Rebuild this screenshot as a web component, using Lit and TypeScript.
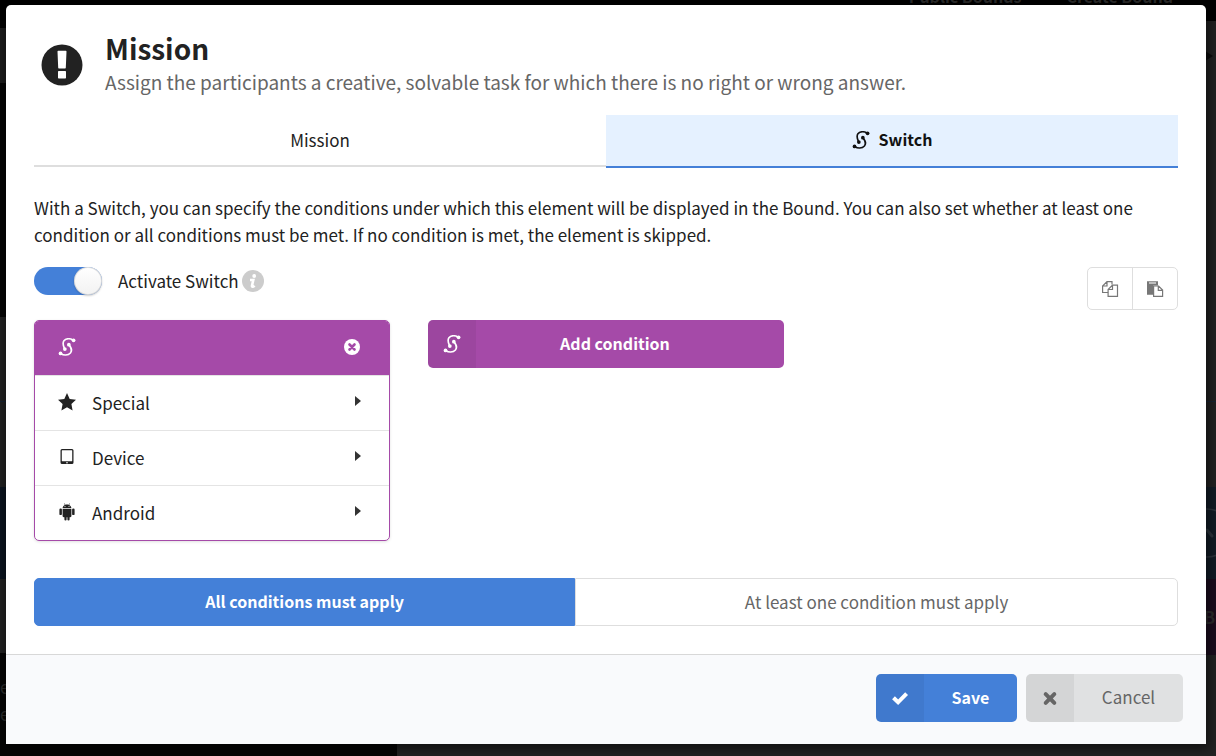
import { LitElement, html, css, svg } from "lit";
import { customElement, state } from "lit/decorators.js";

const icon = (cls: string, box: string, body: unknown) =>
  html`<svg class=${cls} viewBox=${box} aria-hidden="true">${body}</svg>`;

const switchIcon = () =>
  icon(
    "ico",
    "0 1 17 17.5",
    svg`<path d="M14.400 3.200C12 1.200 7.600 1.100 5.500 3.700 3.600 6.400 5 8.600 6.300 11.700M2.800 16.100c2.200 2 6.800 2 9-.6 2.200-2.800.8-5-1.400-7.900" fill="none" stroke="currentColor" stroke-width="1.600"/><g fill="currentColor"><circle cx="14.900" cy="3.300" r="1.800"/><circle cx="2.200" cy="16" r="1.800"/><circle cx="6.400" cy="11.800" r="1.800"/><circle cx="10.300" cy="7.500" r="1.800"/></g>`
  );

const starIcon = () =>
  icon("ico", "0 0 18 18", svg`<path fill="currentColor" d="M9 0l2.700 5.900 6.300.8-4.600 4.400 1.200 6.300L9 14.300l-5.600 3.100 1.200-6.300L0 6.700l6.300-.8z"/>`);

const tabletIcon = () =>
  icon(
    "ico",
    "0 0 18 18",
    svg`<path fill="currentColor" fill-rule="evenodd" d="M4 1h10a1.500 1.500 0 0 1 1.500 1.500v12A1.500 1.500 0 0 1 14 16H4a1.500 1.500 0 0 1-1.500-1.500v-12A1.500 1.500 0 0 1 4 1zm.2 1.200a.4.400 0 0 0-.4.400v10.200c0 .2.200.4.400.4h9.600a.4.4 0 0 0 .400-.400V2.600a.4.400 0 0 0-.400-.400zM9 13.900a.8.800 0 1 0 0 1.600.8.800 0 0 0 0-1.600z"/>`
  );

const androidIcon = () =>
  icon(
    "ico",
    "0 0 18 18",
    svg`<g fill="currentColor"><path fill-rule="evenodd" d="M4.600 5.100c.1-1.500 1-2.600 2.300-3.200L6.100.4l.4-.2.800 1.500c1.100-.4 2.300-.4 3.400 0l.8-1.500.4.200-.8 1.500c1.300.6 2.200 1.700 2.300 3.200zM7 3a.5.500 0 1 0 0 1 .5.500 0 0 0 0-1zm4 0a.5.500 0 1 0 0 1 .5.500 0 0 0 0-1z"/><path d="M4.600 5.700h8.800v7.300c0 .7-.5 1.200-1.200 1.200h-.6v2.300a1.100 1.100 0 0 1-2.200 0v-2.300h-.8v2.300a1.100 1.100 0 0 1-2.200 0v-2.300h-.6c-.7 0-1.200-.5-1.200-1.200z"/><rect x="1.400" y="5.600" width="2.500" height="6.500" rx="1.200"/><rect x="14.100" y="5.600" width="2.500" height="6.500" rx="1.200"/></g>`
  );

const caretIcon = () => icon("caret", "0 0 6 10", svg`<path fill="currentColor" d="M0 0l6 5-6 5z"/>`);

const removeIcon = () =>
  icon(
    "ico",
    "0 0 18 18",
    svg`<circle cx="9" cy="9" r="8" fill="currentColor"/><path d="M6.500 6.500l5 5m0-5l-5 5" stroke="#a54aa8" stroke-width="2.600" stroke-linecap="round"/>`
  );

const alertIcon = () =>
  icon(
    "alert",
    "0 0 42 42",
    svg`<circle cx="21" cy="21" r="20.500" fill="#222"/><path fill="#fff" d="M16.500 7.500q0-.7.700-.7h7.600q.7 0 .7.700l-.7 16.200q0 .7-.7.700h-6.200q-.7 0-.7-.7zM17.700 27h6.600q.7 0 .7.700v6q0 .7-.7.700h-6.600q-.7 0-.7-.7v-6q0-.7.700-.7z"/>`
  );

const infoIcon = () =>
  icon(
    "info",
    "0 0 22 22",
    svg`<circle cx="11" cy="11" r="11" fill="#ccc"/><circle cx="12.200" cy="6" r="1.900" fill="#fff"/><path d="M8 10h3.300l-1.300 5.500q-.3 1.300.8 1.100 1-.2 1.700-1" fill="none" stroke="#fff" stroke-width="2.600"/>`
  );

const copyIcon = () =>
  icon(
    "ico",
    "0 0 18 18",
    svg`<g fill="none" stroke="currentColor" stroke-width="1.200"><path d="M11 4.500V1.600H6L1.600 6v6.500h5.500M1.600 6H6V1.600"/><path d="M11.500 5.100h5v11.300H7.100V9.500zM7.100 9.500h4.400V5.100"/></g>`
  );

const pasteIcon = () =>
  icon(
    "ico",
    "0 0 18 18",
    svg`<path fill="currentColor" d="M1 1.200h11v4.300H7.200v9.300H1z"/><path d="M3 3h7" stroke="#ddd" stroke-width="1.400"/><path d="M7.600 6h5l4 4v6.400h-9zM12.300 6v4.300h4.300" fill="#fff" stroke="currentColor" stroke-width="1.200"/>`
  );

const checkIcon = () =>
  icon("ico", "0 0 18 18", svg`<path d="M2.500 8.800l4.600 4.500L15.600 4.700" fill="none" stroke="currentColor" stroke-width="4"/>`);

const crossIcon = () =>
  icon("ico", "0 0 18 18", svg`<path d="M4.700 5.200l8.600 8.600m0-8.600l-8.600 8.600" stroke="currentColor" stroke-width="4" stroke-linecap="round"/>`);

@customElement("app-root")
export class AppRoot extends LitElement {
  @state() private active = true;
  @state() private matchAll = true;

  static styles = css`
    :host {
      display: block;
      position: relative;
      min-height: 100vh;
      box-sizing: border-box;
      background: #222;
      color: #222;
      font-family: "Noto Sans CJK SC", "Noto Sans CJK JP", sans-serif;
      font-size: 17px;
      line-height: 27px;
    }
    * { box-sizing: border-box; }
    h1, p { margin: 0; }
    button { font: inherit; color: inherit; border: 0; padding: 0; background: none; cursor: pointer; }
    .ico { width: 18px; height: 18px; flex: none; display: block; }

    .page { position: absolute; inset: 0; overflow: hidden; display: flex; flex-direction: column; color: #2c2c2c; }
    .bar {
      flex: none; height: 21px; background: #000; display: flex; justify-content: flex-end; gap: 45px;
      padding-right: 43px; font-size: 16px; font-weight: 700; line-height: 0;
    }
    .nav { margin-top: -4px; }
    .cols { flex: 1; display: flex; min-height: 0; }
    .side { width: 397px; background: #050505; display: flex; flex-direction: column; }
    .main { flex: 1; background: #222; display: flex; flex-direction: column; align-items: stretch; }
    .s1 { height: 7px; background: #020202; }
    .s2 { height: 55px; background: #1d1d1d; }
    .s3 { height: 234px; background: #050505; }
    .s4 { height: 85px; background: #222; border-bottom: 1px solid #182433; }
    .s5 { height: 85px; background: #222; }
    .s6 { height: 92px; background: #0c1420; }
    .s7 { height: 74px; background: #222; }
    .s8 { padding-top: 20px; }
    .m1 { height: 381px; border-bottom: 1px solid #182433; display: flex; justify-content: flex-end; padding: 30px 3px 0 0; }
    .m2 { height: 85px; }
    .m3 { height: 92px; background: #121c26; display: flex; justify-content: flex-end; align-items: center; }
    .m4 { height: 76px; background: #1b0d1d; text-align: right; line-height: 76px; font-weight: 700; padding-right: 1px; }
    .arrow { width: 8px; height: 10px; color: #0c0c0c; }
    .ring { width: 34px; height: 50px; }

    .layer { position: relative; min-height: 100vh; padding: 5px 10px 12px 6px; display: flex; }
    .modal {
      flex: 1; display: flex; flex-direction: column; background: #fff;
      border-radius: 5px 5px 0 0; box-shadow: 1px 3px 12px 2px rgba(0, 0, 0, 0.5);
    }
    .content { flex: 1; padding: 28px; }
    .head { display: flex; align-items: center; gap: 22px; padding-left: 7px; height: 64px; }
    .alert { width: 42px; height: 42px; flex: none; }
    .title { font-size: 28px; line-height: 34px; font-weight: 700; }
    .sub { font-size: 19px; line-height: 34px; color: #666; }

    .tabs { display: flex; align-items: flex-start; margin-top: 18px; }
    .tab {
      flex: 1; height: 52px; display: flex; align-items: center; justify-content: center;
      gap: 9px; border-bottom: 2px solid #dedede; padding-bottom: 2px;
    }
    .tab.on {
      height: 53px; background: #e5f1ff; border-bottom-color: #4480d8;
      font-size: 16px; font-weight: 700; color: #111;
    }
    .text { margin-top: 26px; }

    .bar-row { display: flex; justify-content: space-between; margin-top: 19px; height: 43px; }
    .switch { display: flex; align-items: center; height: 28px; }
    .switch label { padding-bottom: 2px; }
    .toggle {
      appearance: none; margin: 0 16px 0 0; width: 68px; height: 28px; border-radius: 14px;
      background: #ddd; display: flex; cursor: pointer;
    }
    .toggle::before {
      content: ""; width: 28px; height: 28px; border-radius: 50%;
      background: linear-gradient(#fff, #f2f2f2);
      box-shadow: 0 1px 2px rgba(0, 0, 0, 0.2), 0 0 0 1px rgba(0, 0, 0, 0.12) inset;
    }
    .toggle:checked { background: #4480d8; justify-content: flex-end; }
    .info { width: 22px; height: 22px; margin-left: 3px; }
    .tools { display: flex; border: 1px solid #dedede; border-radius: 5px; color: #777; }
    .tool { width: 44px; display: grid; place-items: center; }
    .tool + .tool { width: 45px; border-left: 1px solid #dedede; }

    .conds { display: grid; grid-template-columns: 356px 356px; gap: 38px; align-items: start; margin-top: 10px; }
    .card { border: 1px solid #a54aa8; border-radius: 5px; overflow: hidden; box-shadow: 0 1px 3px rgba(0, 0, 0, 0.12); }
    .card-head {
      height: 54px; background: #a54aa8; color: #fff; display: flex; align-items: center;
      justify-content: space-between; padding: 0 28px 2px 23px;
    }
    .row {
      width: 100%; height: 55px; display: flex; align-items: center; gap: 16px;
      padding: 0 28px 0 23px; border-top: 1px solid #e4e4e4; text-align: left;
    }
    .row .ico { margin-bottom: 2px; }
    .name { flex: 1; padding-bottom: 2px; }
    .caret { width: 6px; height: 10px; margin-bottom: 4px; color: #333; }

    .btn { display: flex; height: 48px; border-radius: 5px; overflow: hidden; }
    .btn-ico { width: 48px; height: 48px; display: grid; place-items: center; background: rgba(0, 0, 0, 0.05); }
    .btn-text { flex: 1; line-height: 46px; text-align: center; }
    .add { background: #a54aa8; color: #fff; font-size: 16px; font-weight: 700; padding-right: 30px; }

    .modes { display: flex; margin-top: 37px; }
    .mode { flex: 603; height: 48px; border: 1px solid #dedede; color: #666; border-radius: 0 5px 5px 0; padding-bottom: 2px; }
    .mode:first-child { flex: 541; border-radius: 5px 0 0 5px; }
    .mode.on { background: #4480d8; border-color: #4480d8; color: #fff; font-size: 16px; font-weight: 700; }

    .foot {
      display: flex; justify-content: flex-end; gap: 9px; padding: 19px 23px 22px;
      background: #f9fafc; border-top: 1px solid #d8d8d8;
    }
    .save { width: 141px; background: #4480d8; color: #fff; font-size: 16px; font-weight: 700; }
    .cancel { width: 157px; background: #e0e1e2; color: #666; }
  `;

  private row(ico: unknown, label: string) {
    return html`<button class="row">${ico}<span class="name">${label}</span>${caretIcon()}</button>`;
  }

  render() {
    return html`
      <div class="page" aria-hidden="true">
        <div class="bar"><span class="nav">Public Bounds</span><span class="nav">Create Bound</span></div>
        <div class="cols">
          <div class="side">
            <div class="s1"></div><div class="s2"></div><div class="s3"></div><div class="s4"></div>
            <div class="s5"></div><div class="s6"></div><div class="s7"></div>
            <div class="s8">e<br />e</div>
          </div>
          <div class="main">
            <div class="m1">${icon("arrow", "0 0 8 10", svg`<path fill="currentColor" d="M0 0l8 5-8 5z"/>`)}</div>
            <div class="m2"></div>
            <div class="m3">
              ${icon("ring", "0 0 34 50", svg`<g fill="none" stroke="#2c343c"><circle cx="25" cy="25" r="24" stroke-width="1.500"/><path d="M25 22l5 6" stroke-width="3" stroke-linecap="round"/></g>`)}
            </div>
            <div class="m4">B</div>
          </div>
        </div>
      </div>
      <div class="layer">
        <div class="modal" role="dialog" aria-labelledby="title">
          <div class="content">
            <div class="head">
              ${alertIcon()}
              <div>
                <h1 class="title" id="title">Mission</h1>
                <p class="sub">Assign the participants a creative, solvable task for which there is no right or wrong answer.</p>
              </div>
            </div>
            <div class="tabs" role="tablist">
              <button class="tab" role="tab" aria-selected="false">Mission</button>
              <button class="tab on" role="tab" aria-selected="true">${switchIcon()}<span>Switch</span></button>
            </div>
            <p class="text">
              With a Switch, you can specify the conditions under which this element will be displayed in the Bound. You can also set whether at least one condition or all conditions must be met. If no condition is met, the element is skipped.
            </p>
            <div class="bar-row">
              <div class="switch">
                <input class="toggle" id="active" type="checkbox" role="switch" .checked=${this.active}
                  @change=${(e: Event) => (this.active = (e.target as HTMLInputElement).checked)} />
                <label for="active">Activate Switch</label>${infoIcon()}
              </div>
              <div class="tools">
                <button class="tool" aria-label="Copy">${copyIcon()}</button>
                <button class="tool" aria-label="Paste">${pasteIcon()}</button>
              </div>
            </div>
            <div class="conds">
              <div class="card">
                <div class="card-head">${switchIcon()}<button aria-label="Remove">${removeIcon()}</button></div>
                ${this.row(starIcon(), "Special")}
                ${this.row(tabletIcon(), "Device")}
                ${this.row(androidIcon(), "Android")}
              </div>
              <button class="btn add"><span class="btn-ico">${switchIcon()}</span><span class="btn-text">Add condition</span></button>
            </div>
            <div class="modes">
              <button class="mode ${this.matchAll ? "on" : ""}" @click=${() => (this.matchAll = true)}>All conditions must apply</button>
              <button class="mode ${this.matchAll ? "" : "on"}" @click=${() => (this.matchAll = false)}>At least one condition must apply</button>
            </div>
          </div>
          <div class="foot">
            <button class="btn save"><span class="btn-ico">${checkIcon()}</span><span class="btn-text">Save</span></button>
            <button class="btn cancel"><span class="btn-ico">${crossIcon()}</span><span class="btn-text">Cancel</span></button>
          </div>
        </div>
      </div>
    `;
  }
}
